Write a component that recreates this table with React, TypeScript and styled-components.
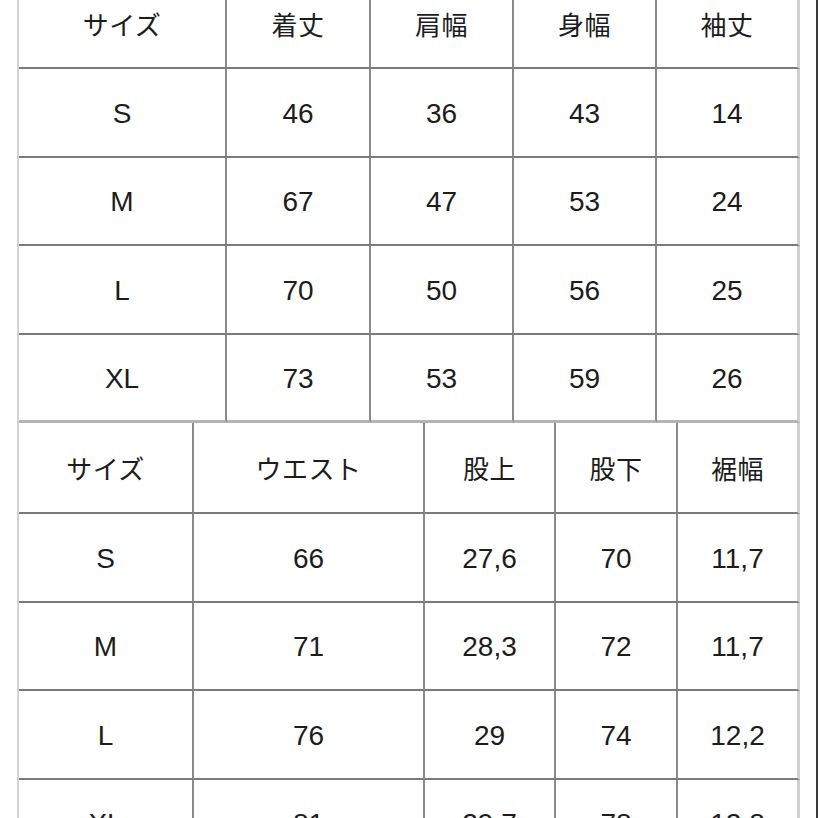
import React from "react";
import styled, { createGlobalStyle } from "styled-components";

const Global = createGlobalStyle`
  html, body { margin: 0; padding: 0; background: #ffffff; overflow: hidden; }
  body { font-family: "Liberation Sans", "Noto Sans CJK JP", sans-serif; }
`;

const Page = styled.div`
  box-sizing: border-box;
  width: 818px;
  height: 818px;
  padding-left: 17px;
  border-right: 2px solid #3a3a3a;
  display: flex;
  flex-direction: column;
  overflow: hidden;
  background: #fff;
`;

const Stack = styled.div`
  margin-top: -21px;
  width: 783px;
  display: flex;
  flex-direction: column;
`;

const Grid = styled.div<{ $cols: string; $rows: string }>`
  display: grid;
  grid-template-columns: ${(p) => p.$cols};
  grid-template-rows: ${(p) => p.$rows};
  border-left: 2px solid #d2d2d2;
`;

const Cell = styled.div<{ $last?: boolean; $bottom?: string }>`
  box-sizing: border-box;
  display: flex;
  align-items: center;
  justify-content: center;
  padding-top: 3px;
  font-family: "Liberation Sans", "Noto Sans CJK JP", sans-serif;
  font-size: 28px;
  color: #1c1c1c;
  border-right: ${(p) => (p.$last ? "3px solid #d0d0d0" : "2px solid #8a8a8a")};
  border-bottom: ${(p) => p.$bottom ?? "2px solid #7a7a7a"};
`;

const HeadText = styled.span`
  font-family: "Noto Sans CJK JP", sans-serif;
  font-size: 26px;
  letter-spacing: 0.5px;
  margin-top: -3px;
`;

type TableProps = {
  cols: string;
  rows: string;
  header: string[];
  body: string[][];
  lastBottom?: string;
};

const Table: React.FC<TableProps> = ({ cols, rows, header, body, lastBottom }) => (
  <Grid $cols={cols} $rows={rows}>
    {header.map((h, i) => (
      <Cell key={"h" + i} $last={i === header.length - 1}>
        <HeadText>{h}</HeadText>
      </Cell>
    ))}
    {body.map((r, ri) =>
      r.map((v, ci) => (
        <Cell
          key={ri + "-" + ci}
          $last={ci === r.length - 1}
          $bottom={ri === body.length - 1 ? lastBottom : undefined}
        >
          {v}
        </Cell>
      ))
    )}
  </Grid>
);

export default function App() {
  return (
    <>
      <Global />
      <Page>
        <Stack>
          <Table
            cols="208px 144px 143px 143px 143px"
            rows="90px 88.5px 88.5px 88.5px 88.5px"
            header={["サイズ", "着丈", "肩幅", "身幅", "袖丈"]}
            body={[
              ["S", "46", "36", "43", "14"],
              ["M", "67", "47", "53", "24"],
              ["L", "70", "50", "56", "25"],
              ["XL", "73", "53", "59", "26"],
            ]}
            lastBottom="3px solid #b4b4b4"
          />
          <Table
            cols="175px 231px 131px 122px 122px"
            rows="91px 88.5px 88.5px 88.5px 88.5px"
            header={["サイズ", "ウエスト", "股上", "股下", "裾幅"]}
            body={[
              ["S", "66", "27,6", "70", "11,7"],
              ["M", "71", "28,3", "72", "11,7"],
              ["L", "76", "29", "74", "12,2"],
              ["XL", "81", "29,7", "78", "12,8"],
            ]}
          />
        </Stack>
      </Page>
    </>
  );
}
